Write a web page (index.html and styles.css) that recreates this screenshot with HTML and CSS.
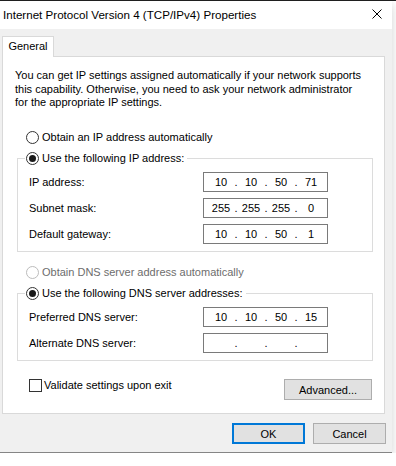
FILE: index.html
```html
<!doctype html>
<html lang="en">
    <head>
        <meta charset="UTF-8" />
        <title>Internet Protocol Version 4 (TCP/IPv4) Properties</title>
        <link rel="stylesheet" href="styles.css">
    </head>

    <body>
        <div class="window">
            <div class="titlebar">
                <span class="title">Internet Protocol Version 4 (TCP/IPv4) Properties</span>
                <svg class="close" width="10" height="10" viewBox="0 0 10 10">
                    <path d="M0.5 0.5L9.5 9.5M9.5 0.5L0.5 9.5" stroke="#000" stroke-width="1" fill="none" />
                </svg>
            </div>

            <div class="dialog-body">
                <div class="tabs">
                    <div class="tab">General</div>
                </div>

                <div class="panel">
                    <p class="intro">
                        You can get IP settings assigned automatically if your network supports<br>
                        this capability. Otherwise, you need to ask your network administrator<br>
                        for the appropriate IP settings.
                    </p>

                    <div class="option choice">
                        <span class="radio"></span>Obtain an IP address automatically
                    </div>

                    <fieldset class="group">
                        <legend>
                            <span class="option"><span class="radio checked"></span>Use the following IP address:</span>
                        </legend>
                        <div class="field-row">
                            <span class="field-label">IP address:</span>
                            <div class="ip-box">
                                <span class="octet">10</span><span class="dot">.</span>
                                <span class="octet">10</span><span class="dot">.</span>
                                <span class="octet">50</span><span class="dot">.</span>
                                <span class="octet">71</span>
                            </div>
                        </div>
                        <div class="field-row">
                            <span class="field-label">Subnet mask:</span>
                            <div class="ip-box">
                                <span class="octet">255</span><span class="dot">.</span>
                                <span class="octet">255</span><span class="dot">.</span>
                                <span class="octet">255</span><span class="dot">.</span>
                                <span class="octet">0</span>
                            </div>
                        </div>
                        <div class="field-row">
                            <span class="field-label">Default gateway:</span>
                            <div class="ip-box">
                                <span class="octet">10</span><span class="dot">.</span>
                                <span class="octet">10</span><span class="dot">.</span>
                                <span class="octet">50</span><span class="dot">.</span>
                                <span class="octet">1</span>
                            </div>
                        </div>
                    </fieldset>

                    <div class="option choice disabled spaced">
                        <span class="radio"></span>Obtain DNS server address automatically
                    </div>

                    <fieldset class="group">
                        <legend>
                            <span class="option"><span class="radio checked"></span>Use the following DNS server addresses:</span>
                        </legend>
                        <div class="field-row">
                            <span class="field-label">Preferred DNS server:</span>
                            <div class="ip-box">
                                <span class="octet">10</span><span class="dot">.</span>
                                <span class="octet">10</span><span class="dot">.</span>
                                <span class="octet">50</span><span class="dot">.</span>
                                <span class="octet">15</span>
                            </div>
                        </div>
                        <div class="field-row">
                            <span class="field-label">Alternate DNS server:</span>
                            <div class="ip-box">
                                <span class="octet"></span><span class="dot">.</span>
                                <span class="octet"></span><span class="dot">.</span>
                                <span class="octet"></span><span class="dot">.</span>
                                <span class="octet"></span>
                            </div>
                        </div>
                    </fieldset>

                    <div class="footer-row">
                        <div class="check-row">
                            <span class="checkbox"></span>Validate settings upon exit
                        </div>
                        <button class="btn advanced">Advanced...</button>
                    </div>
                </div>

                <div class="dialog-buttons">
                    <button class="btn default">OK</button>
                    <button class="btn">Cancel</button>
                </div>
            </div>
        </div>
    </body>
</html>
```

FILE: styles.css
```css
* {
    box-sizing: border-box;
}

body {
    margin: 0;
    background: #fff;
    border-top: 1px solid #1f1f1f;
    font-family: "Liberation Sans", Arial, sans-serif;
    font-size: 11px;
    color: #000;
}

.window {
    width: 392px;
    background: #f0f0f0;
    border-bottom: 1px solid #858585;
    box-shadow: 0 4px 10px rgba(0, 0, 0, 0.18);
}

.titlebar {
    height: 28px;
    background: #fff;
    display: flex;
    align-items: center;
    justify-content: space-between;
    padding: 0 10px 2px 3px;
}

.title {
    font-size: 11.6px;
    white-space: nowrap;
}

.close {
    display: block;
}

.dialog-body {
    padding: 7px 7px 8px 2px;
}

.tabs {
    display: flex;
}

.tab {
    position: relative;
    width: 52px;
    height: 21px;
    margin-bottom: -1px;
    background: #fff;
    border: 1px solid #d9d9d9;
    border-bottom: none;
    text-align: center;
    line-height: 19px;
}

.panel {
    background: #fff;
    border: 1px solid #d9d9d9;
    padding: 12px 11px 13px 12px;
}

.intro {
    margin: 0 0 19px;
    height: 41px;
    line-height: 13.5px;
    white-space: nowrap;
}

.option {
    display: flex;
    align-items: center;
    height: 16px;
    white-space: nowrap;
}

.choice {
    margin-left: 11px;
}

.spaced {
    margin-top: 12px;
}

.option.disabled {
    color: #6d6d6d;
}

.radio {
    width: 13px;
    height: 13px;
    flex-shrink: 0;
    margin-right: 3px;
    border: 1px solid #333;
    border-radius: 50%;
    background: #fff;
    display: flex;
    align-items: center;
    justify-content: center;
}

.radio.checked::after {
    content: "";
    width: 7px;
    height: 7px;
    border-radius: 50%;
    background: #1a1a1a;
}

.option.disabled .radio {
    border-color: #bcbcbc;
}

.group {
    margin: 5px 0 0 2px;
    padding: 6px 0 7px;
    border: 1px solid #dcdcdc;
    min-width: 0;
}

.group legend {
    margin-left: 7px;
    padding: 0 3px 0 1px;
}

.field-row {
    display: flex;
    align-items: center;
    height: 20px;
    padding-left: 11px;
}

.field-row + .field-row {
    margin-top: 6px;
}

.field-label {
    width: 174px;
}

.ip-box {
    width: 125px;
    height: 20px;
    border: 1px solid #7a7a7a;
    background: #fff;
    display: flex;
    align-items: center;
    padding-left: 6px;
}

.octet {
    width: 22px;
    text-align: center;
}

.dot {
    width: 8px;
    text-align: center;
}

.footer-row {
    display: flex;
    justify-content: space-between;
    align-items: flex-start;
    margin-top: 16px;
}

.check-row {
    display: flex;
    align-items: center;
    height: 16px;
    margin-left: 14px;
}

.checkbox {
    width: 13px;
    height: 13px;
    margin-right: 2px;
    border: 1px solid #333;
    background: #fff;
}

.btn {
    font: inherit;
    color: #000;
    height: 21px;
    padding: 0;
    background: #e1e1e1;
    border: 1px solid #adadad;
}

.advanced {
    width: 88px;
    margin-top: 2px;
    margin-right: 1px;
}

.dialog-buttons {
    display: flex;
    justify-content: flex-end;
    gap: 8px;
    margin-top: 9px;
    margin-right: -1px;
}

.dialog-buttons .btn {
    width: 73px;
}

.btn.default {
    border: 2px solid #0078d7;
}
```
